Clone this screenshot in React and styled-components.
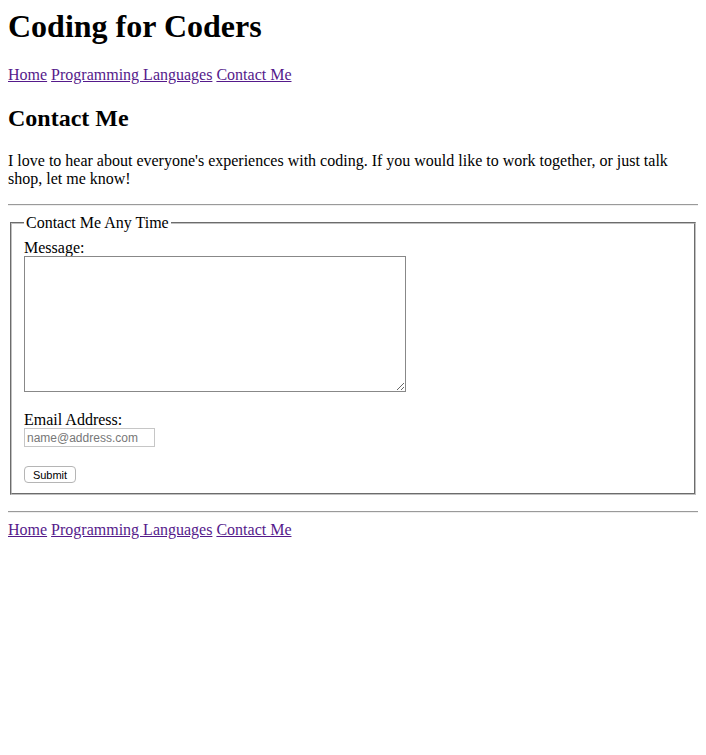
import styled, { createGlobalStyle } from 'styled-components'

const GlobalStyle = createGlobalStyle`
	body {
		margin: 8px;
		background: #fff;
		color: #000;
		font-family: "Liberation Serif", "Times New Roman", serif;
		font-size: 16px;
	}
`

const links = ['Home', 'Programming Languages', 'Contact Me']

const App = () => {
	return (
		<>
			<GlobalStyle />
			<header>
				<SiteTitle>Coding for Coders</SiteTitle>
				<NavBar links={links} />
			</header>
			<main>
				<PageTitle>Contact Me</PageTitle>
				<Intro>
					I love to hear about everyone's experiences with coding. If you would like to work together, or just
					talk shop, let me know!
				</Intro>
				<Rule />
				<form onSubmit={(e) => e.preventDefault()}>
					<Fieldset>
						<Legend>Contact Me Any Time</Legend>
						<Label htmlFor='message'>Message:</Label>
						<MessageBox id='message' />
						<Label htmlFor='email' $spaced>
							Email Address:
						</Label>
						<EmailInput id='email' type='email' placeholder='name@address.com' />
						<SubmitButton type='submit'>Submit</SubmitButton>
					</Fieldset>
				</form>
				<Rule $bottom />
			</main>
			<footer>
				<NavBar links={links} />
			</footer>
		</>
	)
}

const NavBar = ({ links }) => (
	<Nav>
		{links.map((l, i) => (
			<span key={l}>
				<NavLink href='#'>{l}</NavLink>
				{i < links.length - 1 ? ' ' : ''}
			</span>
		))}
	</Nav>
)

const SiteTitle = styled.h1`
	font-size: 32px;
	font-weight: bold;
	margin: 0 0 21px;
	line-height: 37px;
`

const Nav = styled.nav`
	line-height: 18px;
`

const NavLink = styled.a`
	color: #551a8b;
	text-decoration: underline;
`

const PageTitle = styled.h2`
	font-size: 24px;
	font-weight: bold;
	margin: 20px 0;
	line-height: 28px;
`

const Intro = styled.p`
	margin: 16px 0;
	line-height: 18px;
`

const Rule = styled.hr`
	border: none;
	border-top: 1px solid #9a9a9a;
	border-bottom: 1px solid #eeeeee;
	margin: ${(p) => (p.$bottom ? '16px 0 8px' : '0 0 8px')};
	height: 0;
`

const Fieldset = styled.fieldset`
	margin: 0 2px;
	padding: 7px 12px 10px 12px;
	border: 2px groove #c0c0c0;
	display: flex;
	flex-direction: column;
	align-items: flex-start;
`

const Legend = styled.legend`
	padding: 0 2px;
	line-height: 18px;
`

const Label = styled.label`
	display: block;
	line-height: 17px;
	margin-top: ${(p) => (p.$spaced ? '19px' : '0')};
`

const MessageBox = styled.textarea`
	display: block;
	box-sizing: border-box;
	width: 382px;
	height: 136px;
	margin: 0;
	border: 1px solid #888;
	padding: 2px;
	font-family: "Liberation Mono", monospace;
	font-size: 13px;
`

const EmailInput = styled.input`
	display: block;
	box-sizing: border-box;
	width: 131px;
	height: 19px;
	margin: 0;
	padding: 1px 2px;
	border: 1px solid #c6c6c6;
	font-family: "Liberation Sans", Arial, sans-serif;
	font-size: 12px;

	&::placeholder {
		color: #777;
	}
`

const SubmitButton = styled.button`
	margin-top: 19px;
	box-sizing: border-box;
	height: 17px;
	width: 52px;
	padding: 0;
	border: 1px solid #b5b5b5;
	border-radius: 4px;
	background: #fff;
	font-family: "Liberation Sans", Arial, sans-serif;
	font-size: 11px;
	color: #000;
`

export default App
